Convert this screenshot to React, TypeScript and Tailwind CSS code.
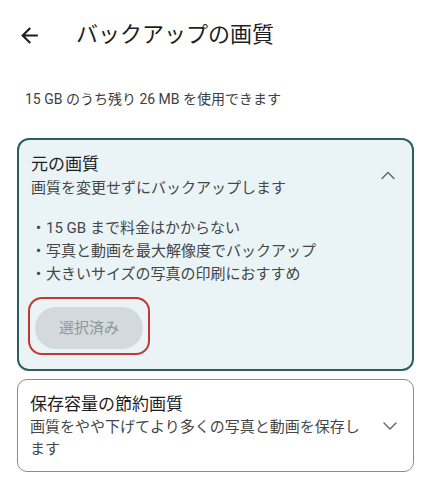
// バックアップの画質 — 設定画面

const font = { fontFamily: 'Roboto, "Noto Sans CJK JP", sans-serif' };

function BackArrow() {
  return (
    <svg width="25" height="25" viewBox="0 0 24 24" className="shrink-0">
      <path d="M20 11H7.83l5.59-5.59L12 4l-8 8 8 8 1.41-1.41L7.83 13H20v-2z" fill="#1f1f1f" />
    </svg>
  );
}

function Chevron({ up }: { up?: boolean }) {
  return (
    <svg width="16" height="10" viewBox="0 0 16 10" className="shrink-0">
      <polyline
        points={up ? "2,7.5 8,1.5 14,7.5" : "2,2 8,8 14,2"}
        fill="none"
        stroke="#5f6368"
        strokeWidth="1.4"
        strokeLinecap="round"
        strokeLinejoin="round"
      />
    </svg>
  );
}

const bullets = [
  "15 GB まで料金はかからない",
  "写真と動画を最大解像度でバックアップ",
  "大きいサイズの写真の印刷におすすめ",
];

export default function App() {
  return (
    <div className="min-h-[491px] w-[431px] bg-white" style={font}>
      {/* ヘッダー */}
      <div className="flex h-[70px] items-center pl-[17px]">
        <BackArrow />
        <h1 className="ml-[34px] text-[22px] leading-[28px] font-normal text-[#1f1f1f]">
          バックアップの画質
        </h1>
      </div>

      <p className="mt-[19px] px-[25px] text-[14px] leading-[20px] text-[#3c4043]">
        15 GB のうち残り 26 MB を使用できます
      </p>

      <div className="mt-[29px] flex flex-col gap-[8px] px-[17px]">
        {/* 選択中のカード */}
        <div className="rounded-[12px] border-2 border-[#2e5d64] bg-[#eaf4f7] pb-[14px] pl-[12px] pt-[12px]">
          <div className="flex items-center">
            <div className="flex-1">
              <p className="text-[17px] leading-[24px] text-[#1f1f1f]">元の画質</p>
              <p className="text-[15px] leading-[24px] text-[#444746]">
                画質を変更せずにバックアップします
              </p>
            </div>
            <div className="flex w-[46px] justify-center pr-[2px]">
              <Chevron up />
            </div>
          </div>

          <ul className="mt-[17px] text-[15px] leading-[23px] text-[#444746]">
            {bullets.map((b) => (
              <li key={b}>・{b}</li>
            ))}
          </ul>

          <div className="ml-[-3px] mt-[11px] inline-block rounded-[14px] border-2 border-[#c0392f] px-[5px] pb-[4px] pt-[8px]">
            <div className="flex h-[42px] w-[108px] items-center justify-center rounded-full bg-[#d3d9dc] text-[15px] text-[#8f989c]">
              選択済み
            </div>
          </div>
        </div>

        {/* 節約画質 */}
        <div className="flex items-center rounded-[10px] border border-[#8c8c8c] bg-white pb-[11px] pl-[12px] pt-[12px]">
          <div className="w-[336px]">
            <p className="text-[17px] leading-[24px] text-[#1f1f1f]">保存容量の節約画質</p>
            <p className="text-[15px] leading-[22px] text-[#444746]">
              画質をやや下げてより多くの写真と動画を保存します
            </p>
          </div>
          <div className="flex flex-1 justify-center">
            <Chevron />
          </div>
        </div>
      </div>
    </div>
  );
}
